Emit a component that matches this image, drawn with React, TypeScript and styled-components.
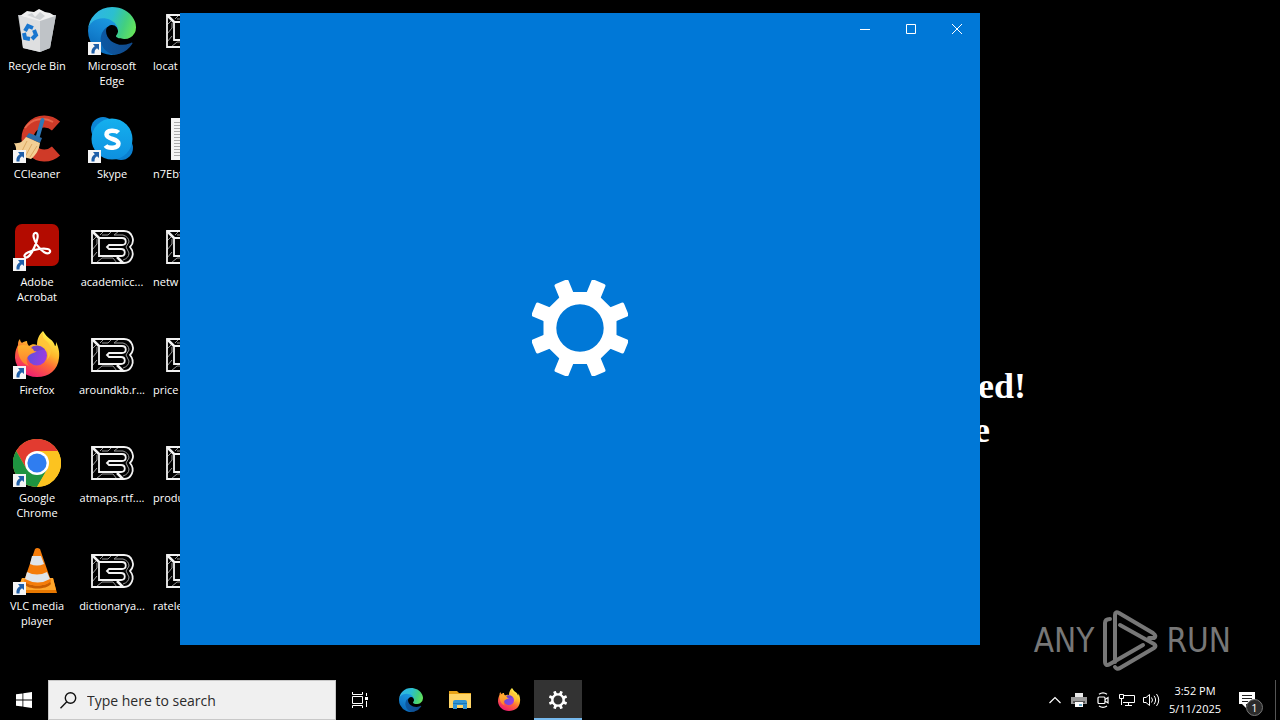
import React from "react";
import styled, { createGlobalStyle } from "styled-components";

const ui = `"Open Sans", "Noto Sans", "Liberation Sans", sans-serif`;

const GlobalStyle = createGlobalStyle`
  * { box-sizing: border-box; }
  body { margin: 0; background: #000; overflow: hidden; font-family: ${ui}; }
  button, input { font-family: inherit; border: 0; padding: 0; margin: 0; }
`;

const Screen = styled.div`
  position: relative;
  display: flex;
  flex-direction: column;
  height: 100vh;
  background: #000;
  color: #fff;
`;

const Desktop = styled.main`
  position: relative;
  flex: 1;
  min-height: 0;
`;

const IconGrid = styled.ul`
  display: grid;
  grid-auto-flow: column;
  grid-template-rows: repeat(6, 108px);
  grid-auto-columns: 75px;
  width: max-content;
  margin: 0;
  padding: 0;
  list-style: none;
`;

const Shortcut = styled.button`
  display: flex;
  flex-direction: column;
  align-items: center;
  gap: 3px;
  width: 74px;
  height: 108px;
  padding-top: 7px;
  background: none;
  color: #fff;
`;

const Picture = styled.span`
  position: relative;
  width: 48px;
  height: 48px;
  svg { display: block; }
`;

const LinkBadge = styled.svg`
  position: absolute;
  left: 0;
  bottom: 0;
`;

const Caption = styled.span<{ $start?: boolean }>`
  width: 100%;
  padding: 0 3px;
  font-size: 11px;
  line-height: 15px;
  text-align: ${(p) => (p.$start ? "left" : "center")};
  white-space: ${(p) => (p.$start ? "nowrap" : "normal")};
`;

const Wallpaper = styled.div`
  position: absolute;
  left: 974px;
  top: 364px;
  width: 52px;
  font: bold 36px/44px "Liberation Serif", "Times New Roman", serif;
  text-align: right;
  p { margin: 0; }
  p + p { text-align: left; }
`;

const AppWindow = styled.section`
  position: absolute;
  left: 180px;
  top: 13px;
  width: 800px;
  height: 632px;
  display: flex;
  flex-direction: column;
  background: #0078d7;
`;

const TitleBar = styled.header`
  display: flex;
  justify-content: flex-end;
  height: 32px;
`;

const CaptionButton = styled.button`
  display: grid;
  place-items: center;
  width: 46px;
  height: 32px;
  background: none;
  color: #fff;
`;

const Splash = styled.div`
  flex: 1;
  display: grid;
  place-items: center;
  padding-bottom: 34px;
`;

const Watermark = styled.div`
  position: absolute;
  right: 49px;
  bottom: 8px;
  display: flex;
  align-items: center;
  gap: 8px;
  color: #777;
  font: 33px/62px "Liberation Sans Narrow", "DejaVu Sans Condensed", sans-serif;
`;

const Taskbar = styled.footer`
  display: flex;
  height: 40px;
  background: #000;
`;

const TaskButton = styled.button<{ $active?: boolean }>`
  display: grid;
  place-items: center;
  width: 48px;
  height: 40px;
  background: ${(p) => (p.$active ? "#333" : "none")};
  box-shadow: ${(p) => (p.$active ? "inset 0 -2px #76b9ed" : "none")};
  color: #fff;
`;

const SearchBox = styled.label`
  display: flex;
  align-items: center;
  gap: 10px;
  width: 288px;
  padding-left: 11px;
  background: #f0f0f0;
  border: 1px solid #c8c8c8;
  color: #111;
`;

const SearchInput = styled.input`
  flex: 1;
  min-width: 0;
  padding-top: 2px;
  background: none;
  outline: none;
  font-size: 14px;
  line-height: 20px;
  color: #222;
  &::placeholder { color: #2b2b2b; opacity: 1; }
`;

const Pinned = styled.nav`
  display: flex;
  gap: 1px;
  margin-left: 3px;
`;

const Tray = styled.div`
  display: flex;
  margin-left: auto;
`;

const TrayButton = styled.button`
  display: grid;
  place-items: center;
  width: 24px;
  background: none;
  color: #fff;
`;

const Clock = styled.button`
  width: 64px;
  background: none;
  color: #fff;
  font-size: 11px;
  line-height: 18px;
  text-align: center;
  white-space: nowrap;
  time { display: block; }
`;

const ActionCenter = styled.button`
  position: relative;
  display: grid;
  place-items: center;
  width: 40px;
  background: none;
`;

const Count = styled.span`
  position: absolute;
  left: 19px;
  top: 19px;
  width: 17px;
  height: 17px;
  border: 1px solid #777;
  border-radius: 50%;
  background: #2b2b2b;
  color: #fff;
  font-size: 11px;
  line-height: 15px;
  text-align: center;
`;

const ShowDesktop = styled.button`
  width: 5px;
  margin-left: 8px;
  background: none;
  border-left: 1px solid #555;
`;

const Gear = ({ size }: { size: number }) => (
  <svg width={size} height={size} viewBox="-48 -48 96 96" fill="#fff" aria-hidden="true">
    <path
      fillRule="evenodd"
      d="M-15-36H15L36.500-15V15L15 36H-15L-36.500 15V-15ZM0-23.700A23.700 23.700 0 1 0 0 23.700A23.700 23.700 0 1 0 0-23.700Z"
    />
    {[0, 1, 2, 3, 4, 5, 6, 7].map((n) => (
      <path
        key={n}
        d="M-7.500-30V-48q0-2 2-2H5.500q2 0 2 2V-30Z"
        transform={`rotate(${22.5 + n * 45})`}
      />
    ))}
  </svg>
);

const Edge = ({ size, id }: { size: number; id: string }) => (
  <svg width={size} height={size} viewBox="0 0 256 256" aria-hidden="true">
    <defs>
      <linearGradient id={`${id}a`} x1="0" x2="1" y1=".5" y2=".5">
        <stop stopColor="#0c59a4" />
        <stop offset="1" stopColor="#114a8b" />
      </linearGradient>
      <linearGradient id={`${id}b`} x1=".7" x2=".3" y1="0" y2="1">
        <stop stopColor="#1b9de2" />
        <stop offset=".5" stopColor="#1482d0" />
        <stop offset="1" stopColor="#0765b6" />
      </linearGradient>
      <linearGradient id={`${id}c`} x1="0" x2="1" y1=".4" y2=".65">
        <stop stopColor="#2fb4e8" />
        <stop offset=".45" stopColor="#2bbfd0" />
        <stop offset=".75" stopColor="#42cf80" />
        <stop offset="1" stopColor="#66e45a" />
      </linearGradient>
    </defs>
    <path fill={`url(#${id}a)`} d="M231.1 190.5c-3.4 1.8-6.9 3.4-10.5 4.7a101.6 101.6 0 0 1-35.9 6.5c-47.3 0-88.5-32.5-88.5-74.3a31.5 31.5 0 0 1 16.4-27.3c-42.8 1.8-53.8 46.4-53.8 72.5 0 73.9 68.1 81.4 82.8 81.4 7.9 0 19.8-2.3 27-4.6l1.3-.4a128.3 128.3 0 0 0 66.6-52.8 4 4 0 0 0-5.4-5.7z" />
    <path fill={`url(#${id}b)`} d="M105.7 241.4a79.2 79.2 0 0 1-22.7-21.3 80.7 80.7 0 0 1 29.5-120c3.2-1.5 8.5-4.1 15.6-4a32.4 32.4 0 0 1 25.7 13 31.9 31.9 0 0 1 6.3 18.7c0-.2 24.5-79.6-80-79.6-43.9 0-80 41.7-80 78.2a130.2 130.2 0 0 0 12.1 56 128 128 0 0 0 156.4 67 75.5 75.5 0 0 1-62.8-8z" />
    <path fill={`url(#${id}c)`} d="M152.3 148.9c-.8 1-3.3 2.5-3.3 5.7 0 2.6 1.7 5.1 4.7 7.2 14.4 10 41.5 8.7 41.6 8.7a59.6 59.6 0 0 0 30.3-8.3 61.4 61.4 0 0 0 30.4-52.9c.3-22.4-8-37.3-11.3-43.9C223.5 23.9 177.7 0 128 0A128 128 0 0 0 0 126.2c.5-36.5 36.8-66 80-66 3.5 0 23.5.3 42 10.1a72.6 72.6 0 0 1 30.9 29.3c6.1 10.6 7.2 24.1 7.2 29.5s-2.7 13.3-7.8 19.9z" />
  </svg>
);

const Firefox = ({ size, id }: { size: number; id: string }) => (
  <svg width={size} height={size} viewBox="0 0 48 48" aria-hidden="true">
    <defs>
      <linearGradient id={`${id}a`} x1=".75" y1=".1" x2=".3" y2=".95">
        <stop stopColor="#fff04a" />
        <stop offset=".35" stopColor="#ffb62c" />
        <stop offset=".6" stopColor="#ff6a36" />
        <stop offset="1" stopColor="#f0206f" />
      </linearGradient>
      <linearGradient id={`${id}b`} x1="0" y1=".3" x2="1" y2=".6">
        <stop stopColor="#5b50dd" />
        <stop offset="1" stopColor="#a03be0" />
      </linearGradient>
      <linearGradient id={`${id}c`} x1=".3" y1="0" x2=".3" y2="1">
        <stop stopColor="#ffb32e" />
        <stop offset="1" stopColor="#ff7a30" />
      </linearGradient>
    </defs>
    <path fill={`url(#${id}a)`} d="M30 0c2 3 4 6 7 8s4 4 5 7c1 0 1-2 1-4 2 4 4 10 3 16C45 39 36 46 24 46S3 38 2 27c0-6 1-9 3-13 0-2 0-4 2-6 0 2 1 3 2 4 1-1 3-2 5-2 0 2 1 4 2 5 3-2 5-2 8-1 0-6 2-10 6-14Z" />
    <circle cx="24" cy="24.500" r="10" fill={`url(#${id}b)`} />
    <path fill={`url(#${id}c)`} d="M5 15c5-2 9-1 13 1 4 0 6 1 6 3s-4 3-6 4-3 2-4 4c-1 2 0 6 2 8-7-2-12-10-11-20Z" />
    <path fill="#ffc43a" d="M26 13c8 2 11 8 8 16 7-8 4-16-2-20-2-2-3-4-2-8-4 4-5 8-4 12Z" opacity=".9" />
    <path fill="#7542c4" d="M18 17c4-4 11-2 14 2-5-1-7 2-11 1l-1-2Z" />
  </svg>
);

const Chrome = () => (
  <svg width="48" height="48" viewBox="-24 -24 48 48" aria-hidden="true">
    <circle r="24" fill="#fcc934" />
    <path fill="#e23b30" d="M0-12H20.8A24 24 0 0 0-20.8-12L-10.4 6Z" />
    <path fill="#1e9340" d="M-20.8-12A24 24 0 0 0 0 24L10.4 6-10.4 6Z" />
    <path fill="#fcc320" d="M20.8-12A24 24 0 0 1 0 24L10.4 6 0-12Z" />
    <circle r="12" fill="#fff" />
    <circle r="9.600" fill="#2f7df0" />
  </svg>
);

const Skype = () => (
  <svg width="48" height="48" viewBox="0 0 48 48" aria-hidden="true">
    <defs>
      <linearGradient id="sky" x1="0" y1="0" x2="0" y2="1">
        <stop stopColor="#14b0ee" />
        <stop offset="1" stopColor="#0e90e0" />
      </linearGradient>
    </defs>
    <circle cx="15" cy="14" r="12" fill="#0c86d6" />
    <circle cx="33" cy="33" r="12" fill="#0b80d0" />
    <circle cx="24" cy="24" r="20.500" fill="url(#sky)" />
    <path d="M30.500 17.500C28 15 18.500 14.500 18.500 19.500S30.500 23.500 30.500 28.500 20 34 17.500 30.500" fill="none" stroke="#fff" strokeWidth="4.500" />
  </svg>
);

const RecycleBin = () => (
  <svg width="48" height="48" viewBox="0 0 48 48" aria-hidden="true">
    <path fill="#b8bcc0" d="M5 8 43 8 37 41 27 45 10 41Z" />
    <path fill="#dedfe0" d="M6 9 27 13 27 45 10 41Z" />
    <path fill="#bfc3c7" d="M27 13 43 8 37 41 27 45Z" />
    <path fill="#f0f0f0" d="M7 9l7-5 7 1 5-3 6 3 5 1 5 3-15 5Z" />
    <path fill="#cfd2d4" d="m14 8 5-2 3 4 5-5 5 4-5 4Z" />
    <g fill="none" stroke="#1976cf" strokeWidth="4">
      <path d="m12 24 3-5 5 2" />
      <path d="m21 23 2 5-4 4" />
      <path d="m17 32-5-1-1-5" />
    </g>
  </svg>
);

const CCleaner = () => (
  <svg width="48" height="48" viewBox="0 0 48 48" aria-hidden="true">
    <path fill="none" stroke="#cf3a28" strokeWidth="12" d="M43 11A17 17 0 1 0 43 36" />
    <path fill="none" stroke="#e8664b" strokeWidth="2" d="M40 7A21 21 0 0 0 12 13" />
    <path d="M29.500 5 25 21" stroke="#2f79b7" strokeWidth="4" strokeLinecap="round" />
    <path fill="#2c6da9" d="m16 18 13 5-2 5-14-6Z" />
    <path fill="#f3cf94" d="m13 22 14 6c-1 7-4 12-9 16L3 40c0-5 1-7-2-12 6 1 9-2 12-6Z" />
    <path stroke="#dba862" fill="none" d="m14 26-6 12m11-9-7 13m12-11-7 11" />
  </svg>
);

const Acrobat = () => (
  <svg width="48" height="48" viewBox="0 0 48 48" aria-hidden="true">
    <rect x="2" y="1" width="44" height="42" rx="7" fill="#b30b00" />
    <path fill="none" stroke="#fff" strokeWidth="2.200" d="M22 10c5-1 2 9-1 15-3 7-7 11-9 9-3-3 7-7 14-8 7-1 12 0 11 3-2 4-9-1-13-7-3-5-5-11-2-12Z" />
  </svg>
);

const Vlc = () => (
  <svg width="48" height="48" viewBox="0 0 48 48" aria-hidden="true">
    <path fill="#e87800" d="M9 31h31l4 15H3Z" />
    <path fill="#ffa62b" d="M9 31h31l3 12H5Z" />
    <path fill="#c95d00" d="M12 34c4 6 21 6 25 0l1 3c-5 6-22 6-27 0Z" />
    <path fill="#f57c0a" d="M22 2q2-2 5 0l11 32c-4 6-23 6-27 0Z" />
    <path fill="#dfe4ea" d="m19 9 9 0 3 8q-7 3-14 0ZM14 25q10 5 20 0l3 7q-12 7-25 0Z" />
  </svg>
);

const LockedFile = () => (
  <svg width="48" height="48" viewBox="0 0 48 48" fill="none" stroke="#f2f2f2" aria-hidden="true">
    <path stroke="#999" d="M4 18l4-4M4 27l5-6v-5M4 35l5-6M8 40l6-5h11l4 5M16 8l-4 4M24 8l-4 4h-6M31 8l-5 4h9q6 2 6 7l-3 5 3 6q0 5-6 7" />
    <path strokeWidth="1.800" d="M4 8H36C44 8 48 18 42 24 48 31 43 40 36 40H4Z" />
    <path strokeWidth="1.800" d="M11 15H34C39 15 39 22 34 22H21L19 24 21 26H33C38 26 38 33 33 33H11Z" />
    <path strokeWidth="2.500" d="m4 8 7 7M29 34l6 6" />
  </svg>
);

const TextFile = () => (
  <svg width="48" height="48" viewBox="0 0 48 48" aria-hidden="true">
    <path fill="#f4f4f4" d="M8 3h32v42H8Z" />
    <path stroke="#aaa" d="M11 7.500h26M11 10.500h26M11 13.500h26M11 16.500h26M11 19.500h26M11 22.500h26M11 25.500h26M11 28.500h26M11 31.500h26M11 34.500h26M11 37.500h26M11 40.500h26" />
  </svg>
);

type Item = { label: string; icon: React.ReactNode; link?: boolean; start?: boolean };

const items: Item[] = [
  { label: "Recycle Bin", icon: <RecycleBin /> },
  { label: "CCleaner", icon: <CCleaner />, link: true },
  { label: "Adobe Acrobat", icon: <Acrobat />, link: true },
  { label: "Firefox", icon: <Firefox size={48} id="fd" />, link: true },
  { label: "Google Chrome", icon: <Chrome />, link: true },
  { label: "VLC media player", icon: <Vlc />, link: true },
  { label: "Microsoft Edge", icon: <Edge size={48} id="ed" />, link: true },
  { label: "Skype", icon: <Skype />, link: true },
  { label: "academicc...", icon: <LockedFile /> },
  { label: "aroundkb.r...", icon: <LockedFile /> },
  { label: "atmaps.rtf....", icon: <LockedFile /> },
  { label: "dictionarya...", icon: <LockedFile /> },
  { label: "locat", icon: <LockedFile />, start: true },
  { label: "n7Ebf", icon: <TextFile />, start: true },
  { label: "netw", icon: <LockedFile />, start: true },
  { label: "price", icon: <LockedFile />, start: true },
  { label: "produ", icon: <LockedFile />, start: true },
  { label: "ratele", icon: <LockedFile />, start: true },
];

export default function App() {
  return (
    <Screen>
      <GlobalStyle />
      <Desktop>
        <IconGrid>
          {items.map((it) => (
            <li key={it.label}>
              <Shortcut>
                <Picture>
                  {it.icon}
                  {it.link && (
                    <LinkBadge width="13" height="13" viewBox="0 0 13 13" aria-hidden="true">
                      <path fill="#f5f5f5" d="M0 0h13v13H0Z" />
                      <path fill="#1f5fa8" d="M5 2h6v6L9 6.300C7 7.500 6.500 9 6.500 11.500H3.500C3 8 4.500 5.500 6.800 4.200Z" />
                    </LinkBadge>
                  )}
                </Picture>
                <Caption $start={it.start}>{it.label}</Caption>
              </Shortcut>
            </li>
          ))}
        </IconGrid>

        <Wallpaper>
          <p>ed!</p>
          <p>e</p>
        </Wallpaper>

        <AppWindow aria-label="Settings">
          <TitleBar>
            <CaptionButton aria-label="Minimize">
              <svg width="10" height="10"><path d="M0 5.500H10" stroke="#fff" /></svg>
            </CaptionButton>
            <CaptionButton aria-label="Maximize">
              <svg width="10" height="10"><path d="M.5.5h9v9h-9Z" fill="none" stroke="#fff" /></svg>
            </CaptionButton>
            <CaptionButton aria-label="Close">
              <svg width="10" height="10"><path d="m0 0 10 10M10 0 0 10" stroke="#fff" /></svg>
            </CaptionButton>
          </TitleBar>
          <Splash><Gear size={96} /></Splash>
        </AppWindow>

        <Watermark>
          <span>ANY</span>
          <svg width="56" height="62" viewBox="0 0 56 62" fill="none" stroke="#777" strokeWidth="4" strokeLinejoin="round" strokeLinecap="round" aria-hidden="true">
            <path d="M13 52V5q0-4 4-2L51 23q4 3 1 5H47" />
            <path d="M8 9Q3 9 3 13V51q0 6 5 3L41 35" />
            <path d="M18 15 52 34q3 2 0 4L18 58q-3 2-5-1" />
          </svg>
          <span>RUN</span>
        </Watermark>
      </Desktop>

      <Taskbar>
        <TaskButton aria-label="Start">
          <svg width="16" height="16" viewBox="0 0 16 16" fill="#fff">
            <path d="M0 2.300 6.500 1.400V7.600H0ZM7.300 1.300 16 0V7.600H7.300ZM0 8.400H6.500V14.600L0 13.700ZM7.300 8.400H16V16L7.300 14.700Z" />
          </svg>
        </TaskButton>
        <SearchBox>
          <svg width="17" height="17" viewBox="0 0 17 17" fill="none" stroke="#111" strokeWidth="1.400" aria-hidden="true">
            <circle cx="10.500" cy="6" r="5.200" />
            <path d="M6.800 9.700.5 16.200" />
          </svg>
          <SearchInput type="text" placeholder="Type here to search" aria-label="Search" />
        </SearchBox>
        <TaskButton aria-label="Task View">
          <svg width="16" height="16" viewBox="0 0 16 16" fill="none" stroke="#fff">
            <path d="M.5 0V2.500H10.500V0M.5 16V13.500H10.500V16M.5 4.500h10v7H.5ZM14.500 1V4M14.500 9V15" />
            <path fill="#fff" stroke="none" d="M13 5h3v3h-3Z" />
          </svg>
        </TaskButton>
        <Pinned aria-label="Apps">
          <TaskButton aria-label="Microsoft Edge"><Edge size={24} id="et" /></TaskButton>
          <TaskButton aria-label="File Explorer">
            <svg width="22" height="20" viewBox="0 0 22 20">
              <path fill="#e8a317" d="M0 1h8l2 2h12v5H0Z" />
              <path fill="#ffd567" d="M0 4h22v14H0Z" />
              <path fill="#3296d4" d="M4 19v-7q0-2 2-2h10q2 0 2 2v7h-4v-4H8v4Z" />
              <path stroke="#1b78b4" d="M4 13.500h14" />
            </svg>
          </TaskButton>
          <TaskButton aria-label="Firefox"><Firefox size={24} id="ft" /></TaskButton>
          <TaskButton $active aria-label="Settings"><Gear size={18} /></TaskButton>
        </Pinned>

        <Tray>
          <TrayButton aria-label="Show hidden icons">
            <svg width="12" height="8" fill="none" stroke="#fff" strokeWidth="1.200"><path d="M.5 7 6 1.500 11.500 7" /></svg>
          </TrayButton>
          <TrayButton aria-label="Printer">
            <svg width="16" height="16" viewBox="0 0 16 16">
              <path fill="#e8e8e8" d="M4 1h8v4H4Z" />
              <path fill="#9a9a9a" d="M0 5h16v7H0Z" />
              <path fill="#555" d="M2 9h12v2H2Z" />
              <path fill="#fff" d="M4 10h8v5H4Z" />
              <path fill="#6aaac8" d="M8 12h3v2H8Z" />
            </svg>
          </TrayButton>
          <TrayButton aria-label="Meet Now">
            <svg width="14" height="16" viewBox="0 0 14 16" fill="none" stroke="#fff" strokeWidth="1.200">
              <rect x="2" y="5" width="7" height="6.500" rx="1" />
              <path d="m9 7.500 3-2v5.500l-3-2M3 2.200Q7-.6 11 2.200M3 14q4 2.600 8 0" />
            </svg>
          </TrayButton>
          <TrayButton aria-label="Network">
            <svg width="16" height="16" viewBox="0 0 16 16" fill="none" stroke="#fff">
              <path d="M5 3.500H15.500v7H4M9.500 10.500v3M6 13.500h7M.5 2.500h4v4h-4ZM2.500 6.500v6.500" />
            </svg>
          </TrayButton>
          <TrayButton aria-label="Volume">
            <svg width="17" height="16" viewBox="0 0 17 16" fill="none" stroke="#fff">
              <path d="M.5 5.500h2.500l3.500-3v11l-3.500-3H.5ZM8.500 5.500q2 2.500 0 5M11 3.800q3.200 4.200 0 8.400M13.500 2q4.500 6 0 12" />
            </svg>
          </TrayButton>
          <Clock>
            <time>3:52 PM</time>
            <time>5/11/2025</time>
          </Clock>
          <ActionCenter aria-label="Notifications">
            <svg width="16" height="16" viewBox="0 0 16 16">
              <path fill="#fff" d="M0 0h16v12H7v4l-4-4H0Z" />
              <path stroke="#222" d="M3 3.500h10M3 6.500h10M3 9.500h6" />
            </svg>
            <Count>1</Count>
          </ActionCenter>
          <ShowDesktop aria-label="Show desktop" />
        </Tray>
      </Taskbar>
    </Screen>
  );
}
